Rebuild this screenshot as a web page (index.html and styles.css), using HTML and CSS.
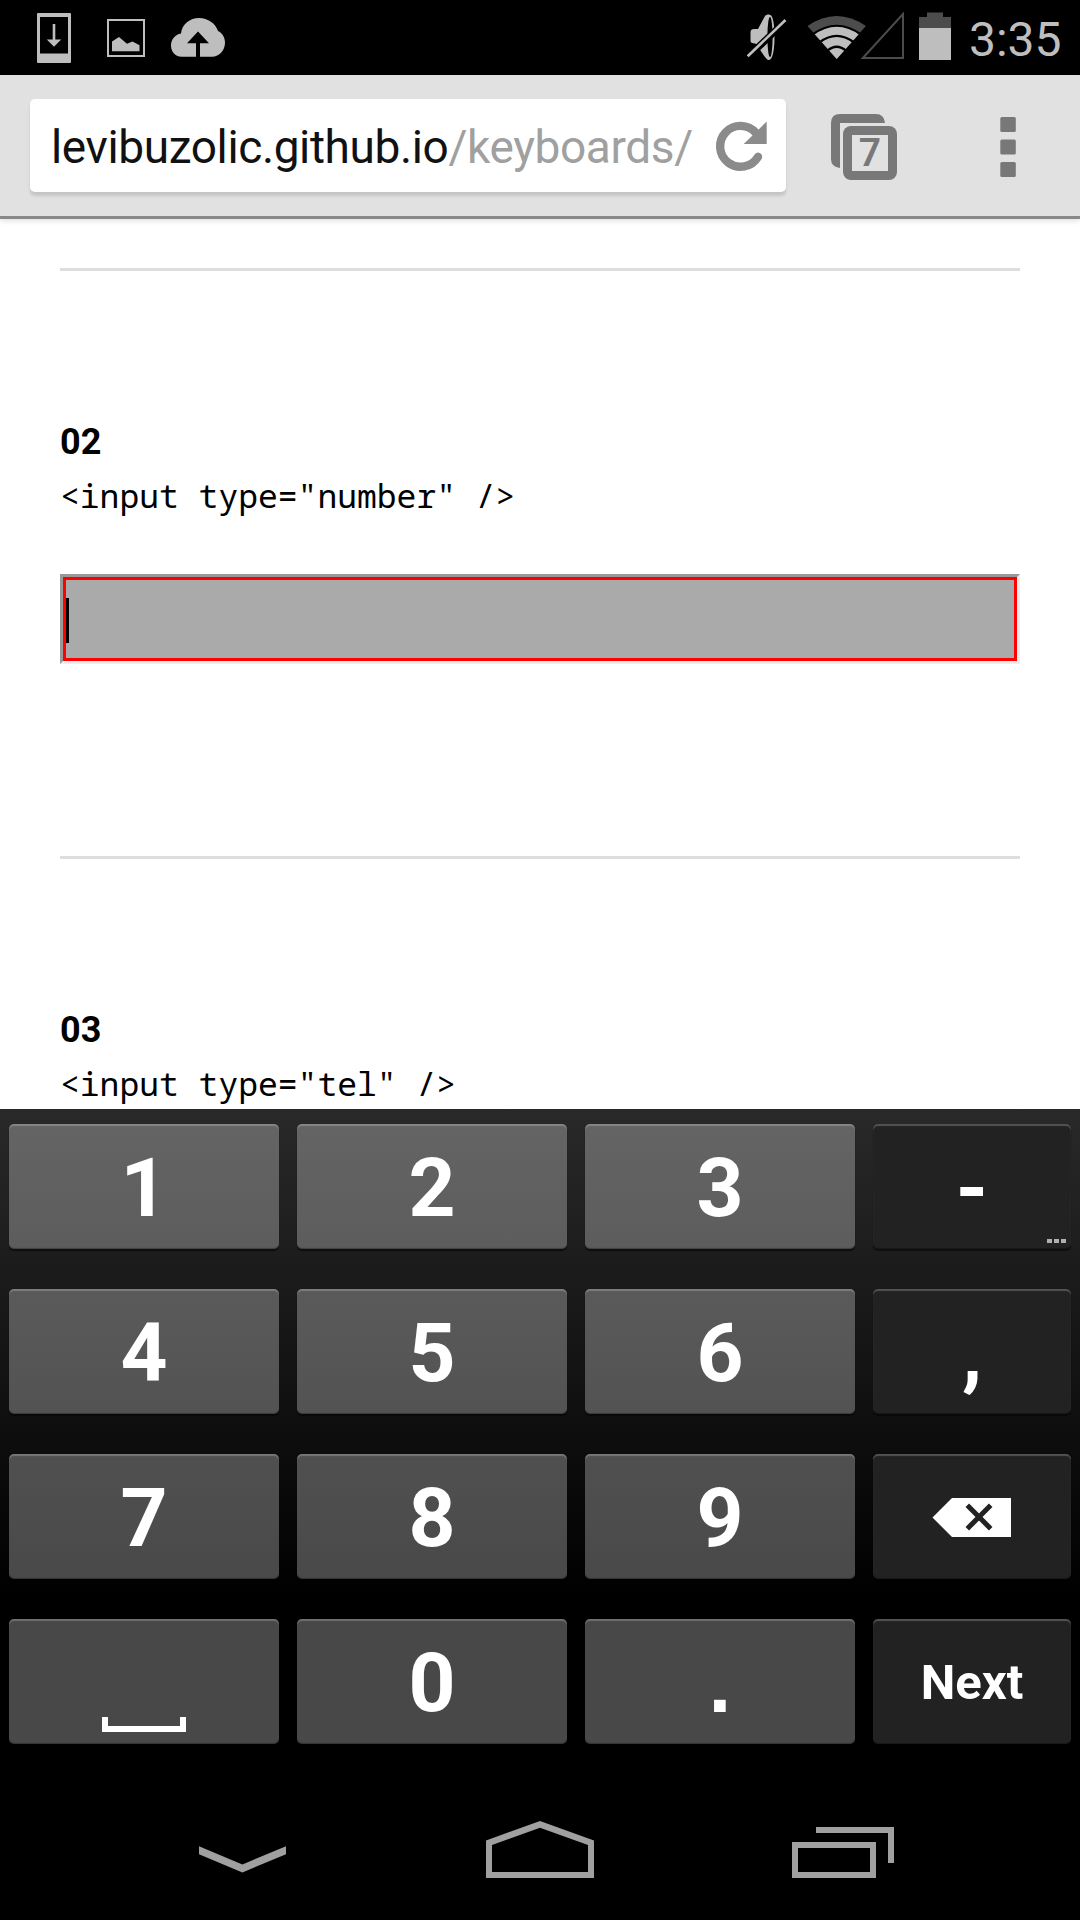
FILE: index.html
```html
<!DOCTYPE html>
<html lang="en">
<head>
<meta charset="utf-8">
<title>Keyboards</title>
<link rel="stylesheet" href="styles.css">
</head>
<body>
<div class="screen">
  <header class="status">
    <div class="status-group notifications">
      <svg width="34" height="50" viewBox="37 13 34 50" fill="#bebebe"><path fill-rule="evenodd" d="M38 13h32a1 1 0 0 1 1 1v48a1 1 0 0 1-1 1H38a1 1 0 0 1-1-1V14a1 1 0 0 1 1-1zM40 17v36.500h28V17z"/><path d="M52.700 24h2.600v15.500h5.900L54 46.700l-7.200-7.200h5.900z"/></svg>
      <svg width="38" height="38" viewBox="107 19 38 38"><rect x="108" y="20" width="36" height="36" fill="none" stroke="#bebebe" stroke-width="2"/><path fill="#bebebe" d="M112 51.300V41.500l7-4.500 8 6.800 5.500-2.300 7 3.800v6z"/></svg>
      <svg width="54" height="39" viewBox="171 19 54 39"><path fill="#bebebe" d="M181.500 57.800C175 57.500 171 52.500 171 46.500c0-6 4-11 10-12C182 25 190 19 199 19c9 0 16.500 5.500 19 13 4.500 2 7 6.500 7 11.500 0 8-5.500 14-13 14.300z"/><path fill="#000" d="M187 44.200 198 32.500l11 11.700h-9V58h-4V44.200z"/></svg>
    </div>
    <div class="status-group system">
      <svg class="mute" width="40" height="47" viewBox="747 14 40 47"><path fill="#bebebe" d="M750.500 32c0-2 1.500-3 3.500-3h4l7-13c2-2 5-2 6.500 0 2 3 3 11 3 21 0 13-2 23-5.500 23-2 0-3.500-2-8.500-9.500l-4-6.500-4-1c-1.500 0-2-1-2-3z"/><ellipse cx="770" cy="37" rx="2.600" ry="20" fill="#000"/><path d="M748.500 56.500 786.500 20" stroke="#000" stroke-width="7"/><path d="M747.700 56.200 785.500 20" stroke="#bebebe" stroke-width="2.700"/></svg>
      <svg class="wifi" width="60" height="44" viewBox="807 15 60 44"><path fill="#4c4c4c" d="M836.700 58 807.500 25q29.200-20 58.400 0z"/><path fill="#bebebe" d="M836.700 58 814.700 33.200q22-15.800 44 0z"/><path fill="none" stroke="#000" stroke-width="2.200" d="M812.500 33.500q24.200-17.500 48.400 0M819.500 41.400q17.200-13 34.400 0M827 50q9.700-8.500 19.400 0"/></svg>
      <svg class="signal" width="44" height="48" viewBox="860 12 44 48"><path fill="none" stroke="#4c4c4c" stroke-width="2" d="M862.800 58H903V14z"/></svg>
      <svg class="battery" width="32" height="48" viewBox="919 12 32 48"><path fill="#4c4c4c" d="M919 60V17h8v-4.500h16V17h8v43z"/><path fill="#bebebe" d="M919 28h32v32h-32z"/></svg>
      <span class="clock">3:35</span>
    </div>
  </header>

  <nav class="toolbar">
    <div class="omnibox">
      <span class="url">levibuzolic.github.io<span class="path">/keyboards/</span></span>
      <svg class="reload" width="52" height="52" viewBox="715 121 52 52"><path fill="none" stroke="#8b8b8b" stroke-width="8.400" stroke-linecap="round" d="M758 156.800A20.400 20.400 0 1 1 756 133"/><path fill="#8b8b8b" d="M766.700 121.500V144h-23z"/></svg>
    </div>
    <svg class="tabs" width="66" height="66" viewBox="831 114 66 66"><path fill="#787878" d="M840 168q-9-1-9-9v-36q0-9 9-9h36q8 0 9 9h-45z"/><rect x="843" y="126" width="54" height="54" rx="8" fill="#787878"/><path fill="#e1e1e1" d="M852 135h36v36h-36z"/><path fill="none" stroke="#e1e1e1" stroke-width="3" d="M841.500 168v-43.500H886"/><text class="tab-count" x="870" y="165.700" text-anchor="middle">7</text></svg>
    <svg class="menu" width="16" height="61" viewBox="1000 117 16 61" fill="#787878"><rect x="1000.300" y="117" width="15.500" height="15" rx="1.500"/><rect x="1000.300" y="139.500" width="15.500" height="15" rx="1.500"/><rect x="1000.300" y="162" width="15.500" height="15" rx="1.500"/></svg>
  </nav>

  <main class="page">
    <section class="example">
      <h2>02</h2>
      <code>&lt;input type="number" /&gt;</code>
      <div class="field"><span class="caret"></span></div>
    </section>
    <section class="example">
      <h2>03</h2>
      <code>&lt;input type="tel" /&gt;</code>
    </section>
  </main>

  <div class="keyboard">
    <div class="key">1</div><div class="key">2</div><div class="key">3</div><div class="key fn">-<span class="more"><i></i><i></i><i></i></span></div>
    <div class="key">4</div><div class="key">5</div><div class="key">6</div><div class="key fn">,</div>
    <div class="key">7</div><div class="key">8</div><div class="key">9</div>
    <div class="key fn delete"><svg width="79" height="39" viewBox="932 1498 79 39"><path fill="#fff" d="M932.500 1517.500 952 1498h59v39h-59z"/><path stroke="#222" stroke-width="5" d="M967.300 1505.300l23.400 23.400M990.700 1505.300l-23.400 23.400"/></svg></div>
    <div class="key space"><span class="space-mark"></span></div><div class="key">0</div><div class="key point">.</div><div class="key fn action">Next</div>
  </div>

  <footer class="navbar">
    <svg class="back" width="88" height="27" viewBox="199 1845.500 88 27" fill="#a0a0a0"><path d="M199 1845.700l43.400 18.200 43.600-18.200v8l-43.600 18.200-43.400-18.200z"/></svg>
    <svg class="home" width="108" height="57" viewBox="486 1821 108 57" fill="#a0a0a0"><path fill-rule="evenodd" d="M540 1821l54 19.500v37.500H486v-37.500zM540 1827.800l-48 17.200v27h96v-27z"/></svg>
    <svg class="recent" width="102" height="51" viewBox="792 1827 102 51" fill="#a0a0a0"><path fill-rule="evenodd" d="M792 1842h84v36h-84zM798 1848v24h72v-24z"/><path d="M816 1827h78v36h-6v-30h-72z"/></svg>
  </footer>
</div>
</body>
</html>
```

FILE: styles.css
```css
* {
  box-sizing: border-box;
}

body {
  margin: 0;
  font-family: Roboto, sans-serif;
}

svg {
  display: block;
  flex: none;
}

.screen {
  display: flex;
  flex-direction: column;
  width: 1080px;
  height: 1920px;
  overflow: hidden;
  background: #fff;
}

/* Status bar */
.status {
  display: flex;
  justify-content: space-between;
  flex: none;
  height: 75px;
  padding: 0 19px 0 37px;
  background: #000;
}

.status-group {
  display: flex;
  align-items: center;
}

.notifications {
  gap: 36px;
}

.notifications svg:last-child {
  margin-left: -10px;
}

.wifi {
  margin-left: 20px;
}

.signal {
  margin: 0 15px 3px -7px;
}

.battery {
  margin-bottom: 3px;
}

.clock {
  width: 92px;
  margin-left: 18px;
  padding-top: 5px;
  color: #bebebe;
  font-size: 48px;
  line-height: 70px;
}

/* Browser toolbar */
.toolbar {
  display: flex;
  flex: none;
  align-items: center;
  height: 144px;
  padding: 0 64px 0 30px;
  border-bottom: 3px solid #888a89;
  background: #e1e1e1;
  box-shadow: 0 2px 5px rgba(0, 0, 0, 0.12);
}

.omnibox {
  display: flex;
  align-items: center;
  justify-content: space-between;
  width: 756px;
  height: 93px;
  margin-bottom: 1px;
  padding: 0 19px 0 21px;
  border-radius: 5px;
  background: #fff;
  box-shadow: 0 4px 3px rgba(0, 0, 0, 0.12);
}

.url {
  padding-top: 3px;
  color: #111;
  font-size: 46px;
  letter-spacing: -0.38px;
  line-height: 90px;
  white-space: nowrap;
}

.path {
  color: #a0a0a0;
}

.reload {
  margin-top: 3px;
}

.tabs {
  margin: 3px 0 0 45px;
}

.tab-count {
  fill: #787878;
  font-size: 39px;
  font-weight: 600;
}

.menu {
  margin: 3px 0 0 auto;
}

/* Web page */
.page {
  flex: none;
  height: 890px;
  padding: 49px 60px 0;
  overflow: hidden;
}

.example {
  height: 588px;
  padding-top: 144px;
  border-top: 3px solid #ddd;
}

.example h2 {
  margin: 0;
  font-size: 36px;
  line-height: 55px;
}

.example code {
  display: block;
  margin-top: -2px;
  font-family: "Droid Sans Mono", "Noto Sans Mono", "DejaVu Sans Mono", monospace;
  font-size: 33px;
  line-height: 55px;
}

.field {
  display: flex;
  align-items: center;
  height: 90px;
  margin-top: 51px;
  border: 3px solid;
  border-color: #999 #eee #eee #999;
  outline: 3px solid #f00;
  outline-offset: -6px;
  background: #aaa;
}

.caret {
  width: 3px;
  height: 45px;
  margin: 3px 0 0 3px;
  background: #000;
}

/* Number keyboard */
.keyboard {
  display: grid;
  flex: none;
  grid-template-columns: 270px 270px 270px 198px;
  grid-auto-rows: 125px;
  gap: 40px 18px;
  height: 661px;
  padding: 15px 9px 0;
  background: linear-gradient(#292929, #000 492px);
}

.key {
  display: flex;
  position: relative;
  align-items: center;
  justify-content: center;
  padding-top: 4px;
  border-radius: 5px;
  background: rgba(255, 255, 255, 0.282);
  box-shadow: inset 0 2px 1px rgba(255, 255, 255, 0.22), inset 0 -1px 1px rgba(0, 0, 0, 0.3), 0 2px 1px rgba(0, 0, 0, 0.5);
  color: #fff;
  font-size: 82px;
  font-weight: 700;
  line-height: 121px;
}

.point {
  font-family: "Liberation Sans", Arial, sans-serif;
}

.fn {
  background: #222;
}

.delete {
  padding: 2px 2px 0 0;
}

.action {
  padding-top: 2px;
  font-size: 49px;
}

.more {
  display: flex;
  position: absolute;
  right: 5px;
  bottom: 6px;
  gap: 2px;
}

.more i {
  width: 5px;
  height: 4px;
  background: #b0b0b0;
}

.space {
  align-items: flex-end;
  padding-bottom: 12px;
}

.space-mark {
  width: 84px;
  height: 15px;
  border: solid #fff;
  border-width: 0 6px 6px;
}

/* System navigation */
.navbar {
  display: flex;
  flex: 1;
  align-items: flex-end;
  justify-content: space-between;
  padding: 0 186px 42px 199px;
  background: #000;
}

.back {
  margin-bottom: 5px;
}

.home {
  margin-right: -1px;
}
```
